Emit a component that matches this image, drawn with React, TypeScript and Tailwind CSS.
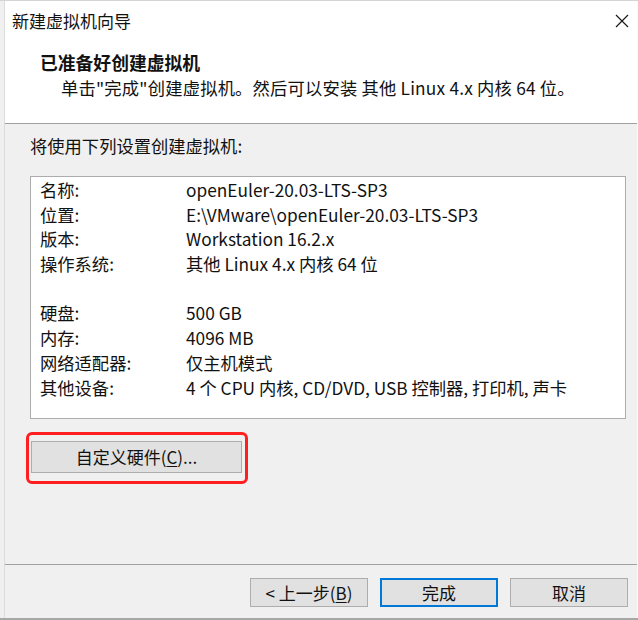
const font = "font-['Noto_Sans_CJK_SC','Noto_Sans',sans-serif]";

const rows: [string, string][] = [
  ["名称:", "openEuler-20.03-LTS-SP3"],
  ["位置:", "E:\\VMware\\openEuler-20.03-LTS-SP3"],
  ["版本:", "Workstation 16.2.x"],
  ["操作系统:", "其他 Linux 4.x 内核 64 位"],
  ["", ""],
  ["硬盘:", "500 GB"],
  ["内存:", "4096 MB"],
  ["网络适配器:", "仅主机模式"],
  ["其他设备:", "4 个 CPU 内核, CD/DVD, USB 控制器, 打印机, 声卡"],
];

function CloseIcon() {
  return (
    <svg width="14" height="14" viewBox="0 0 14 14" fill="none">
      <path d="M1 1L13 13M13 1L1 13" stroke="#1a1a1a" strokeWidth="1.2" />
    </svg>
  );
}

function WinButton({
  children,
  focused = false,
  className = "",
}: {
  children: React.ReactNode;
  focused?: boolean;
  className?: string;
}) {
  return (
    <div
      className={`flex items-center justify-center bg-[#e1e1e1] text-[17px] text-[#111] ${
        focused ? "border-2 border-[#0078d7]" : "border border-[#adadad]"
      } ${className}`}
    >
      {children}
    </div>
  );
}

export default function App() {
  return (
    <div
      className={`${font} flex h-[620px] w-[638px] flex-col border-t border-b-2 border-t-[#d4d4d4] border-b-[#a7a7a7] bg-[#f0f0f0] pl-[4px] text-[#111]`}
    >
      <div className="flex flex-1 flex-col border-l border-[#dcdcdc] border-r border-r-[#fafafa]">
        {/* title bar */}
        <div className="flex h-[40px] items-center justify-between bg-white pl-[7px] pr-[8px]">
          <span className="text-[17px] leading-[24px]">新建虚拟机向导</span>
          <CloseIcon />
        </div>

        {/* header */}
        <div className="h-[83px] border-b border-[#a0a0a0] bg-white pt-[9px]">
          <div className="pl-[35px] text-[17.8px] font-bold leading-[24px]">已准备好创建虚拟机</div>
          <div className="mt-[2px] pl-[56px] text-[17.3px] leading-[24px] tracking-[0.2px]">
            单击"完成"创建虚拟机。然后可以安装 其他 Linux 4.x 内核 64 位。
          </div>
        </div>

        {/* body */}
        <div className="flex flex-1 flex-col pl-[25px] pt-[10px]">
          <div className="text-[17.3px] leading-[24px]">将使用下列设置创建虚拟机:</div>
          <div className="mt-[18px] h-[243px] w-[596px] border border-[#acacac] bg-white pl-[9px] pt-[1px]">
            {rows.map(([k, v], i) => (
              <div key={i} className="grid h-[24.7px] grid-cols-[146px_1fr] text-[17.3px] leading-[24.7px]">
                <span>{k}</span>
                <span>{v}</span>
              </div>
            ))}
          </div>

          <div className="ml-[-4px] mt-[13px] h-[52px] w-[222px] rounded-[6px] border-[3px] border-[#ff1f1f] pl-[2px] pt-[6px]">
            <WinButton className="h-[32px] w-[211px]">
              自定义硬件(<span className="underline underline-offset-2">C</span>)...
            </WinButton>
          </div>
        </div>

        {/* footer */}
        <div className="flex h-[54px] justify-end gap-[12px] border-t border-[#a0a0a0] pr-[9px] pt-[13px]">
          <WinButton className="h-[29px] w-[118px]">
            &lt; 上一步(<span className="underline underline-offset-2">B</span>)
          </WinButton>
          <WinButton focused className="h-[29px] w-[118px]">
            完成
          </WinButton>
          <WinButton className="h-[29px] w-[118px]">取消</WinButton>
        </div>
      </div>
    </div>
  );
}
